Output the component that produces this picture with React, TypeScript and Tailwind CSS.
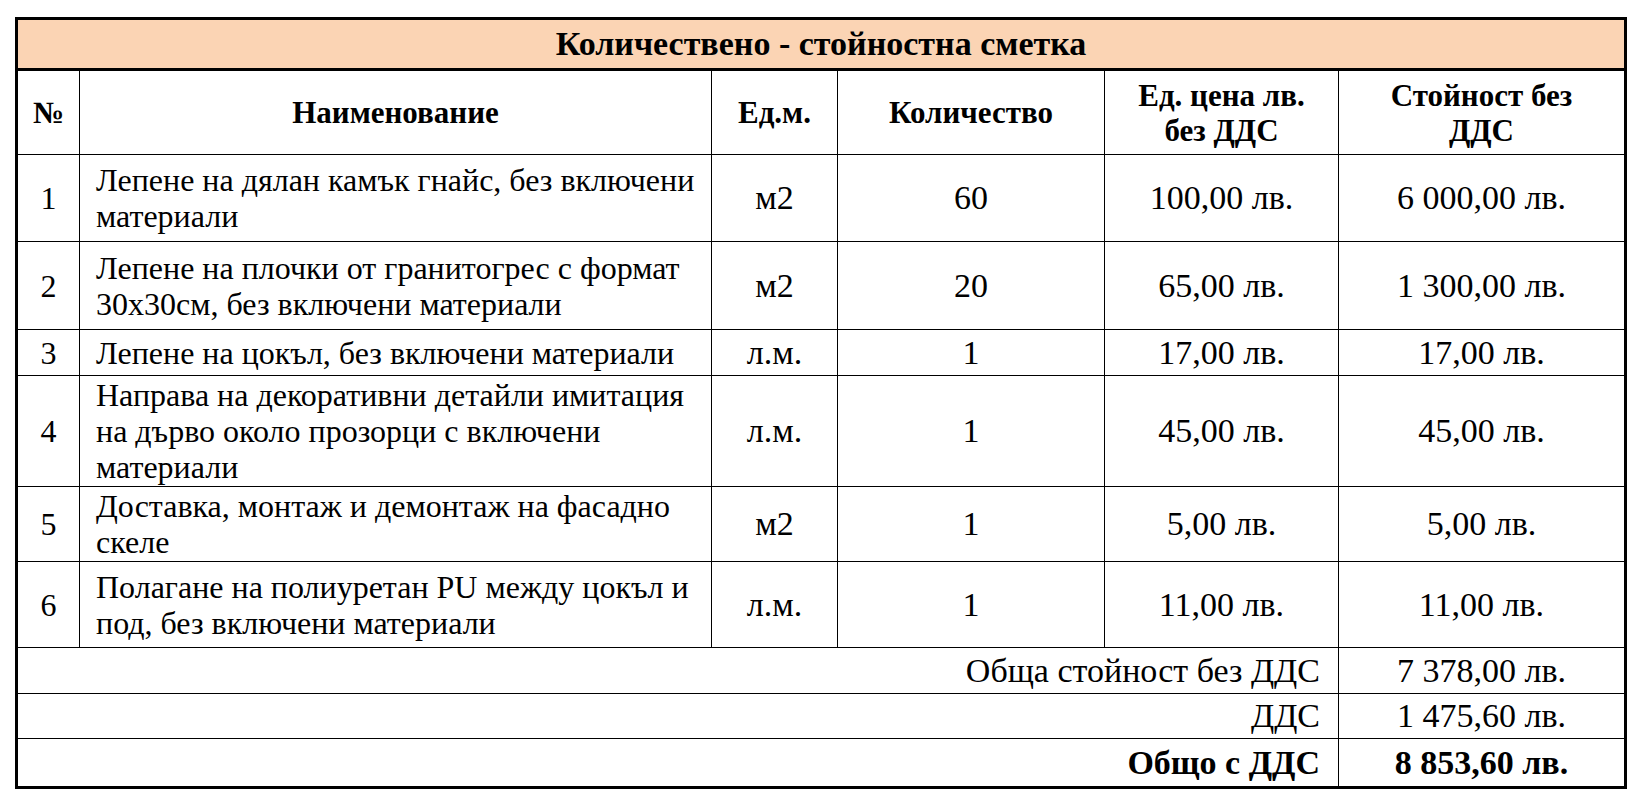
import React from 'react'

type Item = {
  no: number
  name: string[]
  unit: string
  qty: string
  price: string
  total: string
  h: string
}

const ITEMS: Item[] = [
  { no: 1, name: ['Лепене на дялан камък гнайс, без включени', 'материали'], unit: 'м2', qty: '60', price: '100,00 лв.', total: '6 000,00 лв.', h: 'h-[87px]' },
  { no: 2, name: ['Лепене на плочки от гранитогрес с формат', '30х30см, без включени материали'], unit: 'м2', qty: '20', price: '65,00 лв.', total: '1 300,00 лв.', h: 'h-[88px]' },
  { no: 3, name: ['Лепене на цокъл, без включени материали'], unit: 'л.м.', qty: '1', price: '17,00 лв.', total: '17,00 лв.', h: 'h-[46px]' },
  { no: 4, name: ['Направа на декоративни детайли имитация', 'на дърво около прозорци с включени', 'материали'], unit: 'л.м.', qty: '1', price: '45,00 лв.', total: '45,00 лв.', h: 'h-[111px]' },
  { no: 5, name: ['Доставка, монтаж и демонтаж на фасадно', 'скеле'], unit: 'м2', qty: '1', price: '5,00 лв.', total: '5,00 лв.', h: 'h-[75px]' },
  { no: 6, name: ['Полагане на полиуретан PU между цокъл и', 'под, без включени материали'], unit: 'л.м.', qty: '1', price: '11,00 лв.', total: '11,00 лв.', h: 'h-[86px]' },
]

const TOTALS = [
  { label: 'Обща стойност без ДДС', value: '7 378,00 лв.', bold: false, h: 'h-[46px]' },
  { label: 'ДДС', value: '1 475,60 лв.', bold: false, h: 'h-[45px]' },
  { label: 'Общо с ДДС', value: '8 853,60 лв.', bold: true, h: 'h-[47px]' },
]

const COLS = 'grid grid-cols-[62px_632px_126px_267px_234px_285px]'
const cell = 'flex items-center justify-center border-r border-b border-black text-center'
const lastCell = 'flex items-center justify-center border-b border-black text-center'

export default function App() {
  return (
    <div className="min-h-screen bg-white pt-[17px] pl-[15px] font-[family-name:Liberation_Serif,Times_New_Roman,serif] text-[34px] leading-[36px] text-black">
      <div className="w-[1612px] border-[3px] border-black">
        {/* title band */}
        <div className="flex h-[51px] items-center justify-center border-b-[3px] border-black bg-[#fbd4b4] font-bold">
          Количествено - стойностна сметка
        </div>

        {/* column headers */}
        <div className={`${COLS} h-[84px] text-[31px] font-bold leading-[35px]`}>
          <div className={cell}>№</div>
          <div className={cell}>Наименование</div>
          <div className={cell}>Ед.м.</div>
          <div className={cell}>Количество</div>
          <div className={cell}>
            Ед. цена лв.
            <br />
            без ДДС
          </div>
          <div className={lastCell}>
            Стойност без
            <br />
            ДДС
          </div>
        </div>

        {ITEMS.map((it) => (
          <div key={it.no} className={`${COLS} ${it.h}`}>
            <div className={`${cell} text-[32px]`}>{it.no}</div>
            <div className="flex flex-col justify-center border-r border-b border-black pl-[16px] text-[32px]">
              {it.name.map((line) => (
                <span key={line} className="whitespace-nowrap">
                  {line}
                </span>
              ))}
            </div>
            <div className={cell}>{it.unit}</div>
            <div className={cell}>{it.qty}</div>
            <div className={cell}>{it.price}</div>
            <div className={lastCell}>{it.total}</div>
          </div>
        ))}

        {/* totals */}
        {TOTALS.map((t, i) => (
          <div
            key={t.label}
            className={`grid grid-cols-[1321px_285px] ${t.h} ${t.bold ? 'font-bold' : ''}`}
          >
            <div
              className={`flex items-center justify-end border-r border-black pr-[18px] ${i < TOTALS.length - 1 ? 'border-b' : ''}`}
            >
              {t.label}
            </div>
            <div
              className={`flex items-center justify-center border-black ${i < TOTALS.length - 1 ? 'border-b' : ''}`}
            >
              {t.value}
            </div>
          </div>
        ))}
      </div>
    </div>
  )
}
